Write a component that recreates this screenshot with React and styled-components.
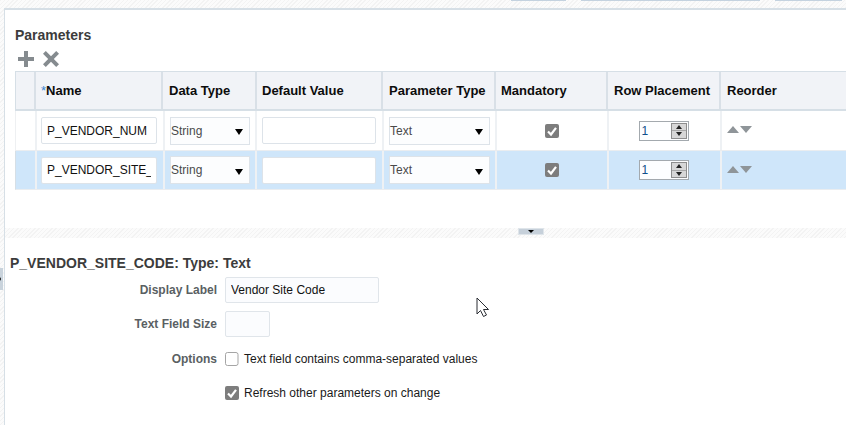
import React from "react";
import styled, { createGlobalStyle } from "styled-components";

const Global = createGlobalStyle`
  html, body { margin: 0; padding: 0; background: #fff; }
  body { font-family: "Liberation Sans", Arial, sans-serif; width: 846px; height: 425px; overflow: hidden; }
  * { box-sizing: border-box; }
`;

const stripes = `repeating-linear-gradient(135deg, #f3f3f3 0 1px, #fbfbfb 1px 3px)`;

const Page = styled.div`
  position: relative;
  width: 846px;
  height: 425px;
  background: ${stripes};
  display: flex;
  flex-direction: column;
`;
const TopTabs = styled.div`
  height: 8px;
  display: flex;
  justify-content: flex-start;
  padding-left: 511px;
  gap: 15px;
`;
const TopTab = styled.div`
  width: ${(p) => p.$w}px;
  height: 1px;
  background: #c4d2df;
`;
const Panel = styled.div`
  flex: 1;
  margin-left: 4px;
  background: #fff;
  border-top: 2px solid #d6dfe6;
  border-left: 1px solid #d6dfe6;
  display: flex;
  flex-direction: column;
  min-height: 0;
`;
const TopPane = styled.section`
  height: 218px;
  padding: 16px 0 0 10px;
`;
const Title = styled.h2`
  margin: 0;
  font-size: 14px;
  line-height: 18px;
  font-weight: 700;
  color: #3c3c3c;
`;
const Toolbar = styled.div`
  display: flex;
  gap: 9px;
  height: 27px;
  padding: 7px 0 0 3px;
`;
const IconBtn = styled.svg`
  width: 16px;
  height: 16px;
  display: block;
  fill: #858b8f;
`;
const Table = styled.div`
  border-top: 1px solid #d6dfe6;
  width: 831px;
`;
const HeadRow = styled.div`
  display: grid;
  grid-template-columns: 20px 127px 94px 126px 113px 112px 113px 125px;
  height: 39px;
  background: #f1f3f7;
  border-bottom: 2px solid #d6dfe6;
  border-left: 1px solid #d6dfe6;
`;
const HeadCell = styled.div`
  display: flex;
  align-items: center;
  padding-left: ${(p) => p.$pl ?? 5}px;
  border-right: 2px solid #d9e0e7;
  font-size: 13px;
  font-weight: 700;
  color: #0c0c0c;
  &:last-child { border-right: 0; }
`;
const Star = styled.span`
  color: #3a85d0;
  font-weight: 400;
`;
const BodyRow = styled.div`
  display: grid;
  grid-template-columns: 21px 128px 92px 127px 113px 112px 113px 124px;
  height: ${(p) => p.$h}px;
  background: ${(p) => (p.$selected ? "#cfe6fa" : "#fff")};
  border-left: 1px solid ${(p) => (p.$selected ? "#d6dfe6" : "#eef0f2")};
  border-bottom: 1px solid #eaedf0;
`;
const Cell = styled.div`
  display: flex;
  align-items: center;
  justify-content: ${(p) => (p.$center ? "center" : "flex-start")};
  padding-left: ${(p) => p.$pl ?? 5}px;
  border-right: 2px solid #eef1f4;
  &:last-child { border-right: 0; }
`;
const TextInput = styled.input`
  display: block;
  width: ${(p) => p.$w}px;
  height: ${(p) => p.$h || 27}px;
  padding: 0 5px;
  border: 1px solid #dde3e9;
  border-radius: 2px;
  background: #fff;
  color: #111;
  font: 12px "Liberation Sans", Arial, sans-serif;
  outline: none;
`;
const SelectBox = styled.div`
  width: ${(p) => p.$w}px;
  height: 28px;
  border: 1px solid #dde3e9;
  background: #fcfdfe;
  display: flex;
  align-items: center;
  justify-content: space-between;
  padding: 0 3px 0 0;
  font-size: 12px;
  color: #4a4a4a;
`;
const Caret = styled.i`
  width: 0;
  height: 0;
  margin: 3px 3px 0 0;
  border-left: 4.5px solid transparent;
  border-right: 4.5px solid transparent;
  border-top: 6px solid #000;
`;
const CheckSvg = styled.svg`
  width: 14px;
  height: 14px;
  display: block;
  flex: none;
`;
const Spinner = styled.div`
  width: 50px;
  height: 20px;
  margin-right: 2px;
  border: 1px solid #a3a9ae;
  background: #fdfeff;
  display: flex;
  justify-content: space-between;
  align-items: center;
  padding: 1px 1px 1px 2px;
  font-size: 12px;
  color: #0f4f8c;
`;
const SpinBtns = styled.div`
  width: 16px;
  height: 16px;
  border: 1px solid #8d8d8d;
  display: flex;
  flex-direction: column;
  background: #a8a8a8;
  gap: 1px;
`;
const SpinPart = styled.div`
  flex: 1;
  background: #d7d7d7;
  display: flex;
  align-items: center;
  justify-content: center;
`;
const SpinUp = styled.i`
  width: 0; height: 0;
  border-left: 3.5px solid transparent;
  border-right: 3.5px solid transparent;
  border-bottom: 4px solid #222;
`;
const SpinDown = styled.i`
  width: 0; height: 0;
  border-left: 3.5px solid transparent;
  border-right: 3.5px solid transparent;
  border-top: 4px solid #222;
`;
const Reorder = styled.div`
  display: flex;
  gap: 1px;
  margin-top: -2px;
`;
const TriUp = styled.i`
  width: 0; height: 0;
  border-left: 6.5px solid transparent;
  border-right: 6.5px solid transparent;
  border-bottom: 7px solid #8f9599;
`;
const TriDown = styled.i`
  width: 0; height: 0;
  border-left: 6.5px solid transparent;
  border-right: 6.5px solid transparent;
  border-top: 7px solid #8f9599;
`;
const Splitter = styled.div`
  height: 10px;
  background: ${stripes};
  display: flex;
  justify-content: flex-start;
  padding-left: 513px;
  flex: none;
`;
const SplitHandle = styled.div`
  width: 26px;
  height: 7px;
  background: #c6d0da;
  border: 1px solid #dfe5ea;
  display: flex;
  align-items: center;
  justify-content: center;
`;
const SplitCaret = styled.i`
  width: 0; height: 0;
  border-left: 3.5px solid transparent;
  border-right: 3.5px solid transparent;
  border-top: 3.5px solid #000;
`;
const DetailPane = styled.section`
  flex: 1;
  padding: 16px 0 0 5px;
`;
const DetailTitle = styled.h3`
  margin: 0 0 5px;
  font-size: 14px;
  line-height: 18px;
  font-weight: 700;
  color: #3c3c3c;
`;
const Form = styled.div`
  display: grid;
  grid-template-columns: 207px auto;
  justify-content: start;
  column-gap: 8px;
  row-gap: 8px;
`;
const Label = styled.div`
  text-align: right;
  font-size: 12px;
  font-weight: 700;
  color: #5a5f63;
  line-height: 26px;
  white-space: nowrap;
  margin-top: ${(p) => p.$mt || 0}px;
`;
const Field = styled.div`
  height: 26px;
  display: flex;
  align-items: center;
  gap: 5px;
  font-size: 12px;
  color: #1a1a1a;
  white-space: nowrap;
  margin-top: ${(p) => p.$mt || 0}px;
`;
const FormInput = styled(TextInput)`
  background: #fbfcfe;
  border-color: #e0e5ea;
`;
const LeftTab = styled.div`
  position: absolute;
  left: 0;
  top: 268px;
  width: 3px;
  height: 22px;
  background: #c9d3dc;
  display: flex;
  align-items: center;
`;
const LeftCaret = styled.i`
  width: 0; height: 0;
  border-top: 2.5px solid transparent;
  border-bottom: 2.5px solid transparent;
  border-left: 1.5px solid #000;
`;
const Pointer = styled.svg`
  position: absolute;
  left: 476px;
  top: 297px;
  width: 14px;
  height: 21px;
`;

const Check = ({ on }) =>
  on ? (
    <CheckSvg viewBox="0 0 14 14">
      <rect x="0" y="0" width="14" height="14" rx="2" fill="#7d7d7d" />
      <path d="M3 7.5 L6 10.5 L11 3.8" fill="none" stroke="#fff" strokeWidth="2.2" />
    </CheckSvg>
  ) : (
    <CheckSvg viewBox="0 0 14 14">
      <rect x="0.5" y="0.5" width="12.5" height="13" rx="2" fill="#fff" stroke="#a5a5a5" />
    </CheckSvg>
  );

const Spin = () => (
  <Spinner>
    1
    <SpinBtns>
      <SpinPart><SpinUp /></SpinPart>
      <SpinPart><SpinDown /></SpinPart>
    </SpinBtns>
  </Spinner>
);

const Row = ({ name, selected, h }) => (
  <BodyRow $selected={selected} $h={h}>
    <Cell $pl={0} />
    <Cell $pl={4}>
      <TextInput readOnly value={name} $w={116} />
    </Cell>
    <Cell $pl={5}>
      <SelectBox $w={80}>String<Caret /></SelectBox>
    </Cell>
    <Cell $pl={5}>
      <TextInput readOnly value="" $w={114} />
    </Cell>
    <Cell $pl={5}>
      <SelectBox $w={101}>Text<Caret /></SelectBox>
    </Cell>
    <Cell $center $pl={0}><Check on /></Cell>
    <Cell $center $pl={0}><Spin /></Cell>
    <Cell $pl={5}>
      <Reorder><TriUp /><TriDown /></Reorder>
    </Cell>
  </BodyRow>
);

export default function App() {
  return (
    <Page>
      <Global />
      <TopTabs>
        <TopTab $w={55} />
        <TopTab $w={179} />
        <TopTab $w={67} />
      </TopTabs>
      <Panel>
        <TopPane>
          <Title>Parameters</Title>
          <Toolbar>
            <IconBtn viewBox="0 0 16 16"><path d="M6 0h4v6h6v4h-6v6H6v-6H0V6h6z" /></IconBtn>
            <IconBtn viewBox="0 0 16 16"><path d="M2.8 0 8 5.2 13.2 0 16 2.8 10.8 8 16 13.2 13.2 16 8 10.8 2.8 16 0 13.2 5.2 8 0 2.8z" /></IconBtn>
          </Toolbar>
          <Table>
            <HeadRow>
              <HeadCell />
              <HeadCell><Star>*</Star>Name</HeadCell>
              <HeadCell $pl={6}>Data Type</HeadCell>
              <HeadCell>Default Value</HeadCell>
              <HeadCell $pl={6}>Parameter Type</HeadCell>
              <HeadCell>Mandatory</HeadCell>
              <HeadCell $pl={6}>Row Placement</HeadCell>
              <HeadCell $pl={6}>Reorder</HeadCell>
            </HeadRow>
            <Row name="P_VENDOR_NUM" h={40} />
            <Row name="P_VENDOR_SITE_CODE" selected h={39} />
          </Table>
        </TopPane>
        <Splitter>
          <SplitHandle><SplitCaret /></SplitHandle>
        </Splitter>
        <DetailPane>
          <DetailTitle>P_VENDOR_SITE_CODE: Type: Text</DetailTitle>
          <Form>
            <Label>Display Label</Label>
            <Field><FormInput readOnly value="Vendor Site Code" $w={154} $h={26} /></Field>
            <Label>Text Field Size</Label>
            <Field><FormInput readOnly value="" $w={45} $h={26} /></Field>
            <Label $mt={1}>Options</Label>
            <Field $mt={1}><Check />Text field contains comma-separated values</Field>
            <span />
            <Field><Check on />Refresh other parameters on change</Field>
          </Form>
        </DetailPane>
      </Panel>
      <LeftTab><LeftCaret /></LeftTab>
      <Pointer viewBox="0 0 14 21">
        <path d="M1 1 L1 17 L4.5 13.5 L7.5 19.5 L10.5 18 L7.5 12.5 L12.5 12.5 Z" fill="#fff" stroke="#2a2d33" strokeWidth="1" />
      </Pointer>
    </Page>
  );
}
